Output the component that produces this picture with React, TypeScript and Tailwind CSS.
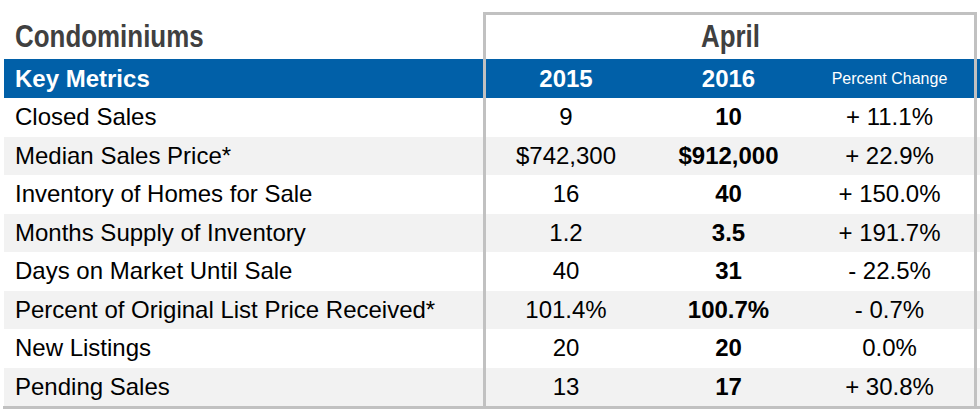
import React from "react";

const rows = [
  { label: "Closed Sales", a: "9", b: "10", pct: "+ 11.1%" },
  { label: "Median Sales Price*", a: "$742,300", b: "$912,000", pct: "+ 22.9%" },
  { label: "Inventory of Homes for Sale", a: "16", b: "40", pct: "+ 150.0%" },
  { label: "Months Supply of Inventory", a: "1.2", b: "3.5", pct: "+ 191.7%" },
  { label: "Days on Market Until Sale", a: "40", b: "31", pct: "- 22.5%" },
  { label: "Percent of Original List Price Received*", a: "101.4%", b: "100.7%", pct: "- 0.7%" },
  { label: "New Listings", a: "20", b: "20", pct: "0.0%" },
  { label: "Pending Sales", a: "13", b: "17", pct: "+ 30.8%" },
];

const sans = "font-['Liberation_Sans',Arial,sans-serif]";

export default function App() {
  return (
    <div className={`w-[980px] h-[414px] bg-white text-black ${sans}`}>
      {/* title row, condensed bold headline */}
      <div className="flex h-[59px] pl-1">
        <div className="w-[479px] pl-[11px] pt-[20px] text-[32px] leading-none font-bold text-[#404040]">
          <span className="inline-block origin-left scale-x-[0.81]">Condominiums</span>
        </div>
        <div className="mt-[12px] w-[494px] border-t-[3px] border-x-[3px] border-[#c1c1c1] text-center">
          <div className="pt-[5px] text-[32px] leading-none font-bold text-[#404040]">
            <span className="inline-block origin-center scale-x-[0.81]">April</span>
          </div>
        </div>
      </div>

      {/* table */}
      <div className="ml-[3px] border-b-[3px] border-[#c1c1c1]">
        <div className="flex h-[39px] items-stretch bg-[#0160a8] text-white ml-px">
          <div className="w-[479px] pl-[11px] flex items-center text-[24px] font-bold">Key Metrics</div>
          <div className="w-[494px] flex border-x-[3px] border-[#c1c1c1]">
            <div className="w-[160px] flex items-center justify-center text-[24px] font-bold">2015</div>
            <div className="w-[165px] flex items-center justify-center text-[24px] font-bold">2016</div>
            <div className="w-[157px] flex items-center justify-center text-[16px]">Percent Change</div>
          </div>
        </div>
        {rows.map((r, i) => (
          <div key={r.label} className={`flex h-[38.5px] ml-px text-[24px] ${i % 2 === 1 ? "bg-[#f2f2f2]" : "bg-white"}`}>
            <div className="w-[479px] pl-[11px] flex items-center whitespace-nowrap">{r.label}</div>
            <div className="w-[494px] flex border-x-[3px] border-[#c1c1c1]">
              <div className="w-[160px] flex items-center justify-center">{r.a}</div>
              <div className="w-[165px] flex items-center justify-center font-bold">{r.b}</div>
              <div className="w-[157px] flex items-center justify-center">{r.pct}</div>
            </div>
          </div>
        ))}
      </div>
    </div>
  );
}
